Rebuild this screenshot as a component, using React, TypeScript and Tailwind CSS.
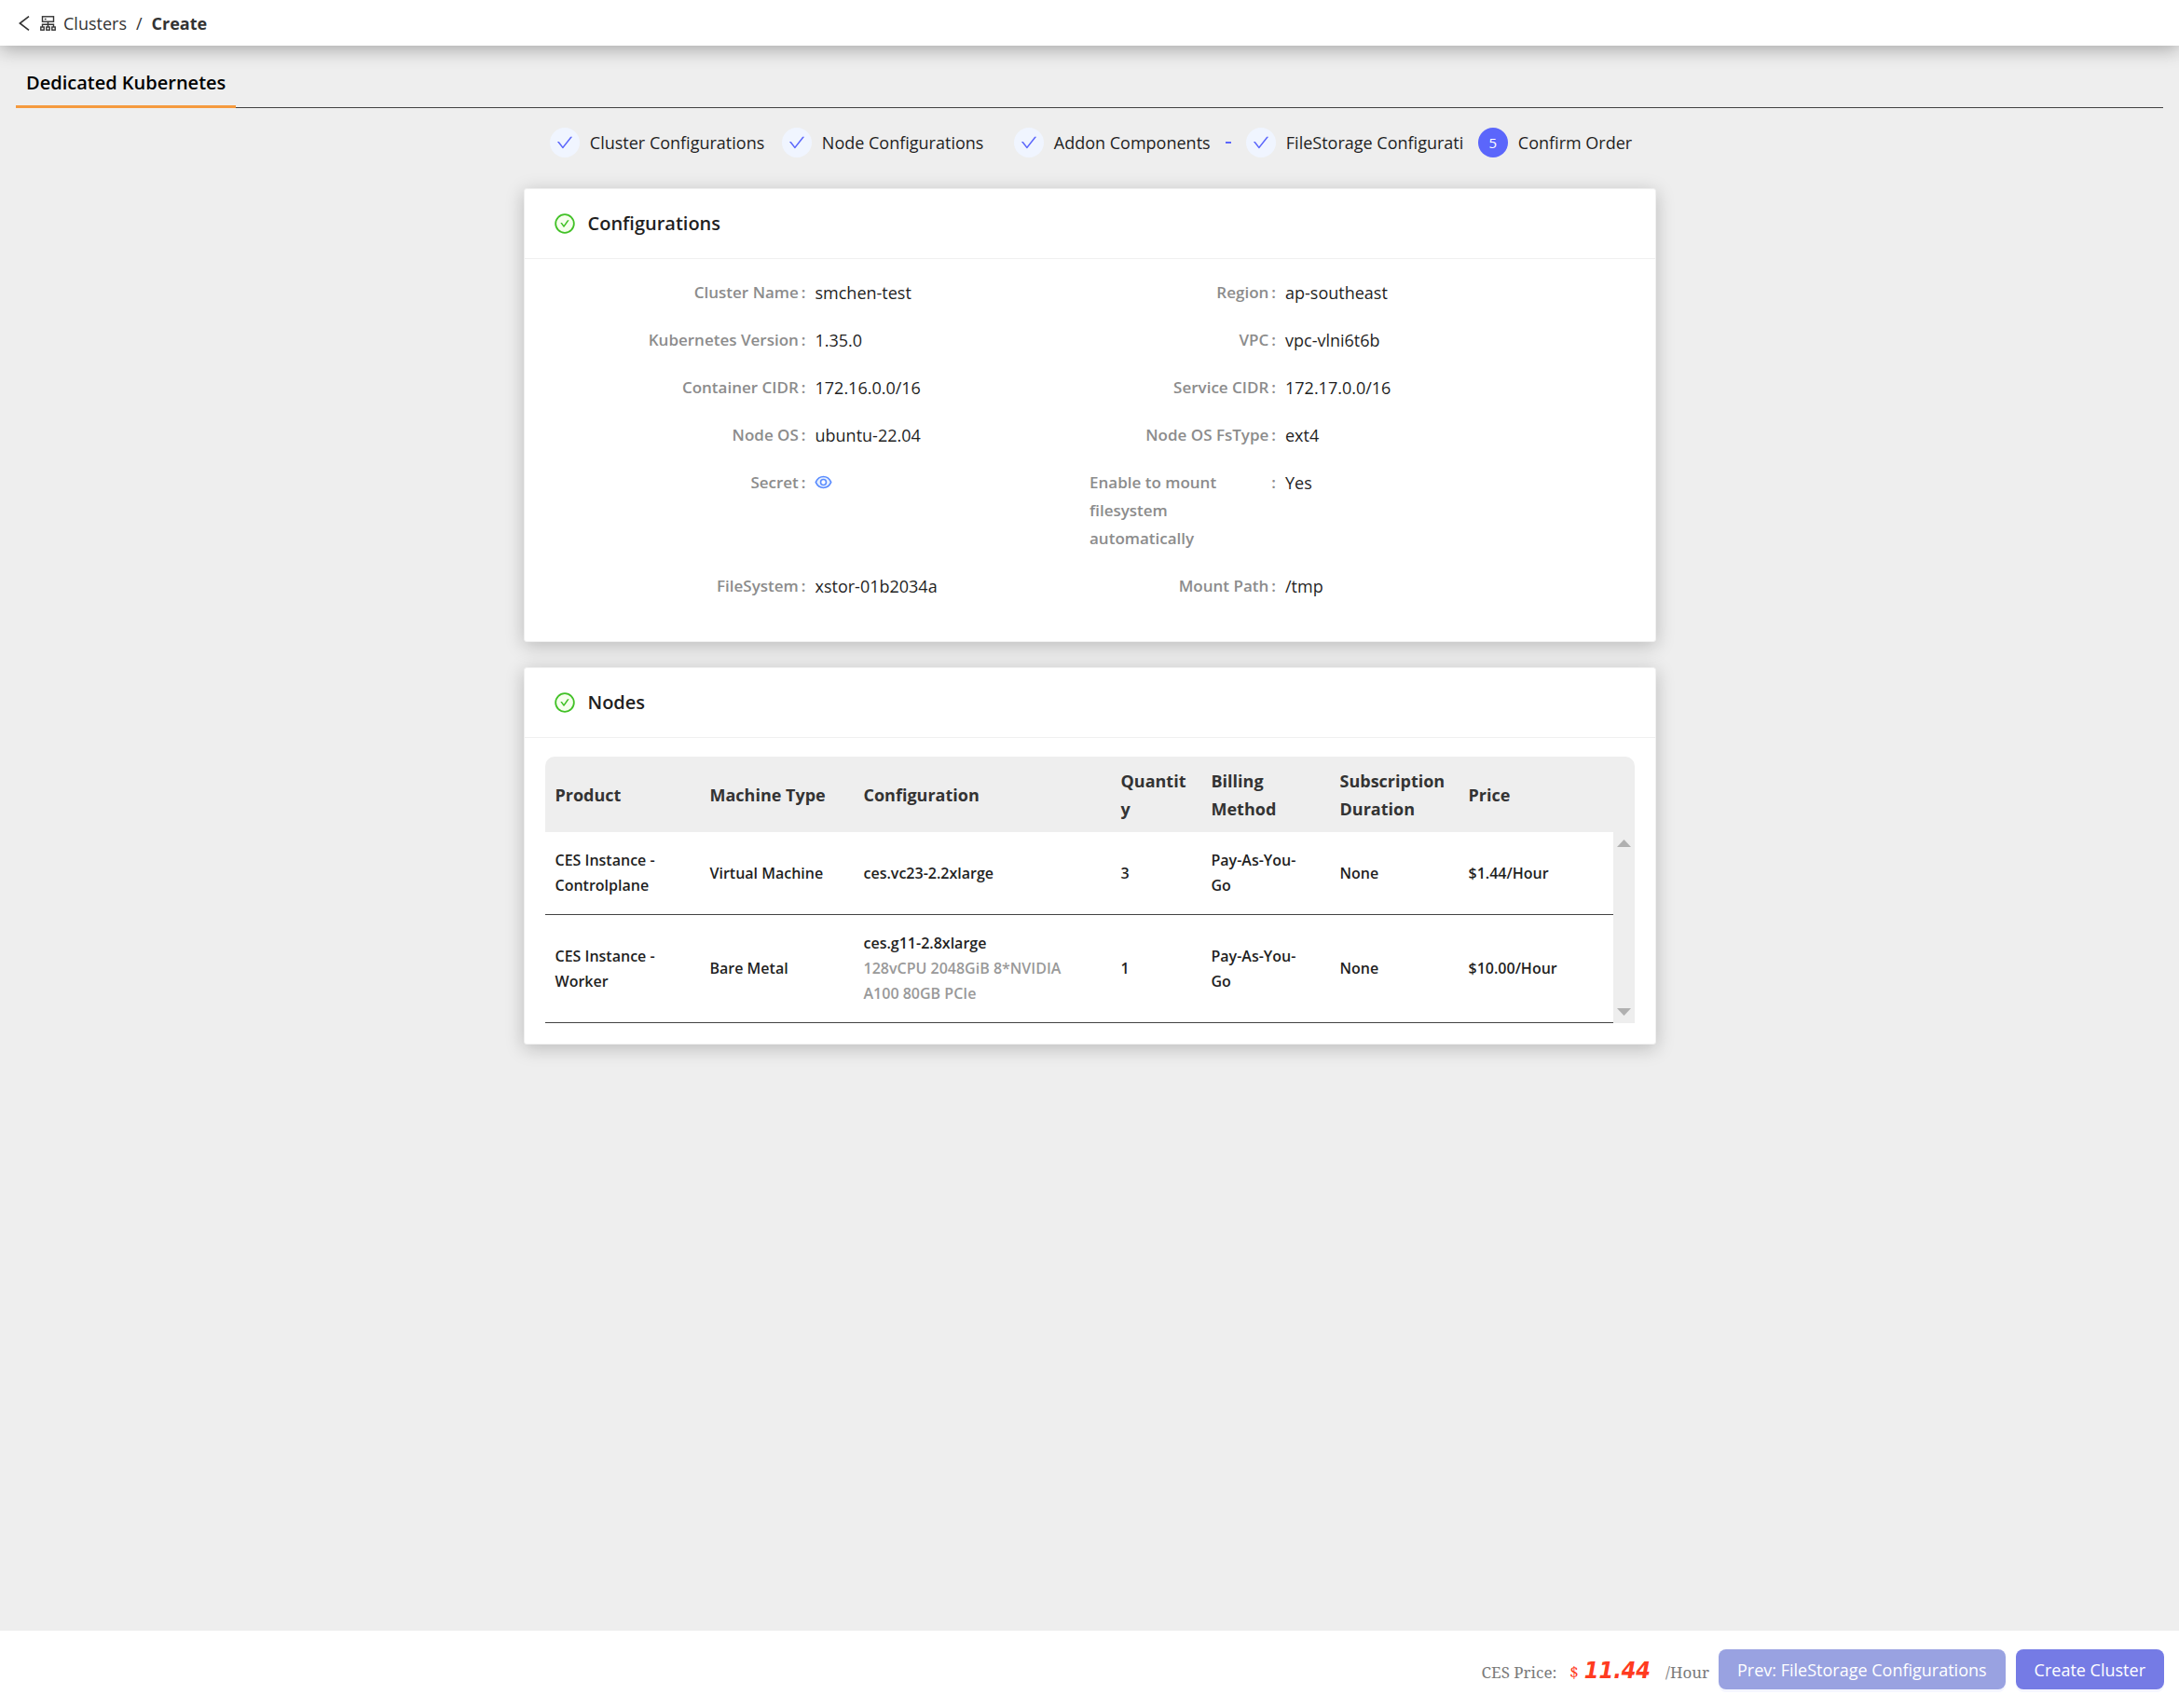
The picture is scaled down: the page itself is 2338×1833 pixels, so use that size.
import React from "react";

function CheckMark({ className }: { className?: string }) {
  return (
    <svg viewBox="0 0 1024 1024" fill="currentColor" className={className} aria-hidden="true">
      <path d="M912 190h-69.9c-9.8 0-19.1 4.500-25.100 12.200L404.700 724.500 207 474a32 32 0 0 0-25.100-12.200H112c-6.700 0-10.400 7.700-6.300 12.900l273.900 347c12.800 16.200 37.400 16.200 50.300 0l488.400-618.900c4.100-5.100.4-12.800-6.300-12.800z" />
    </svg>
  );
}

function CheckCircle() {
  return (
    <svg viewBox="0 0 1024 1024" className="size-6 shrink-0" aria-hidden="true">
      <circle cx="512" cy="512" r="420" fill="#f6ffed" stroke="#41c126" strokeWidth="76" />
      <path
        fill="#41c126"
        d="M699 353h-46.900c-10.200 0-19.900 4.900-25.900 13.300L469 584.300l-71.200-98.800c-6-8.300-15.600-13.300-25.900-13.300H325c-6.500 0-10.300 7.400-6.500 12.700l124.600 172.800a31.800 31.800 0 0 0 51.700 0l210.600-292c3.900-5.300.1-12.700-6.400-12.700z"
      />
    </svg>
  );
}

function ClusterIcon() {
  return (
    <svg viewBox="0 0 17 16" fill="none" stroke="currentColor" strokeWidth="1.400" className="h-4 w-[17px] shrink-0" aria-hidden="true">
      <rect x="2.500" y="0.800" width="12" height="5.400" />
      <path d="M4.800 3.500h1.800" />
      <path d="M8.500 6.200V12M2.500 12V9.200h12V12" />
      <rect x="0.800" y="12" width="3.400" height="3.200" />
      <rect x="6.800" y="12" width="3.400" height="3.200" />
      <rect x="12.800" y="12" width="3.400" height="3.200" />
    </svg>
  );
}

function EyeIcon() {
  return (
    <svg viewBox="0 0 1024 1024" className="size-[21px]" aria-hidden="true">
      <path
        fill="#e6f0ff"
        stroke="#5a8cff"
        strokeWidth="80"
        d="M909.800 502C820 314 686 222 512 222S204 314 114.200 502a24 24 0 0 0 0 20C204 710 338 802 512 802s308-92 397.800-280a24 24 0 0 0 0-20z"
      />
      <circle cx="512" cy="512" r="144" fill="#fff" stroke="#5a8cff" strokeWidth="76" />
    </svg>
  );
}

const steps = [
  { title: "Cluster Configurations" },
  { title: "Node Configurations" },
  { title: "Addon Components", tail: true },
  { title: "FileStorage Configurati" },
  { title: "Confirm Order", current: true },
];

function Steps() {
  return (
    <ol className="grid grid-cols-[repeat(4,249px)_auto] justify-center py-[21px] pl-[3px]">
      {steps.map((step, i) => (
        <li key={step.title} className="flex items-center whitespace-nowrap leading-8 text-[#1f1f1f]">
          {step.current ? (
            <span className="mr-[11px] flex size-8 shrink-0 items-center justify-center rounded-full bg-[#5b66fb] text-[15px] text-white">
              {i + 1}
            </span>
          ) : (
            <span className="mr-[11px] flex size-8 shrink-0 items-center justify-center rounded-full bg-[#f0f5ff] text-[#5b66fb]">
              <CheckMark className="size-5" />
            </span>
          )}
          {step.title}
          {step.tail && <span className="mr-4 ml-auto h-0.5 w-1.5 bg-[#5b66fb]" />}
        </li>
      ))}
    </ol>
  );
}

function Card({ title, children }: { title: string; children: React.ReactNode }) {
  return (
    <section className="rounded-[3px] border border-[#f0f0f0] bg-white shadow-[0_4px_20px_rgba(0,0,0,0.22)]">
      <div className="flex h-[75px] items-center gap-[13px] border-b border-[#f0f0f0] pl-[31px]">
        <CheckCircle />
        <h2 className="text-xl font-semibold text-[#1f1f1f]">{title}</h2>
      </div>
      {children}
    </section>
  );
}

const fields: [string, React.ReactNode][] = [
  ["Cluster Name", "smchen-test"],
  ["Region", "ap-southeast"],
  ["Kubernetes Version", "1.35.0"],
  ["VPC", "vpc-vlni6t6b"],
  ["Container CIDR", "172.16.0.0/16"],
  ["Service CIDR", "172.17.0.0/16"],
  ["Node OS", "ubuntu-22.04"],
  ["Node OS FsType", "ext4"],
  [
    "Secret",
    <button type="button" aria-label="Show secret" className="-ml-0.5 flex h-7 items-center">
      <EyeIcon />
    </button>,
  ],
  ["Enable to mount filesystem automatically", "Yes"],
  ["FileSystem", "xstor-01b2034a"],
  ["Mount Path", "/tmp"],
];

const columns = [
  { title: "Product", width: "w-[166px]" },
  { title: "Machine Type", width: "w-[165px]" },
  { title: "Configuration", width: "w-[276px]" },
  { title: "Quantity", width: "w-[97px]" },
  { title: "Billing Method", width: "w-[138px]" },
  { title: "Subscription Duration", width: "w-[138px]" },
  { title: "Price", width: "w-auto" },
];

const nodes = [
  {
    product: "CES Instance - Controlplane",
    type: "Virtual Machine",
    config: "ces.vc23-2.2xlarge",
    detail: "",
    quantity: 3,
    billing: "Pay-As-You-Go",
    duration: "None",
    price: "$1.44/Hour",
  },
  {
    product: "CES Instance - Worker",
    type: "Bare Metal",
    config: "ces.g11-2.8xlarge",
    detail: "128vCPU 2048GiB 8*NVIDIA A100 80GB PCIe",
    quantity: 1,
    billing: "Pay-As-You-Go",
    duration: "None",
    price: "$10.00/Hour",
  },
];

function NodesTable() {
  return (
    <table className="w-full table-fixed border-separate border-spacing-0 text-left">
      <colgroup>
        {columns.map((c) => (
          <col key={c.title} className={c.width} />
        ))}
        <col className="w-[23px]" />
      </colgroup>
      <thead>
        <tr className="h-[81px] leading-[30px] text-[#333]">
          {columns.map((c) => (
            <th key={c.title} className="bg-[#eee] pr-2.5 pl-[11px] font-bold wrap-anywhere first:rounded-tl-[10px]">
              {c.title}
            </th>
          ))}
          <td className="rounded-tr-[10px] bg-[#eee]" />
        </tr>
      </thead>
      <tbody className="text-base leading-[27px] font-semibold text-[#1f1f1f]">
        {nodes.map((n, i) => (
          <tr key={n.product} className="*:border-b *:border-[#424242] *:py-[17px] *:pr-5 *:pl-[11px]">
            <td>{n.product}</td>
            <td>{n.type}</td>
            <td>
              {n.config}
              {n.detail && <div className="text-[#999]">{n.detail}</div>}
            </td>
            <td>{n.quantity}</td>
            <td>{n.billing}</td>
            <td>{n.duration}</td>
            <td>{n.price}</td>
            {i === 0 && (
              <td rowSpan={nodes.length} aria-hidden="true" className="h-px border-b-0! bg-[#eee] px-1! py-2!">
                <div className="flex h-full flex-col items-center justify-between">
                  <svg viewBox="0 0 15 8" className="w-[15px]">
                    <path d="M7.500 0L15 8H0z" fill="#b0b0b0" />
                  </svg>
                  <svg viewBox="0 0 15 8" className="w-[15px]">
                    <path d="M7.500 8L15 0H0z" fill="#b0b0b0" />
                  </svg>
                </div>
              </td>
            )}
          </tr>
        ))}
      </tbody>
    </table>
  );
}

export default function App() {
  return (
    <div className="flex min-h-screen flex-col bg-[#eee] font-['Open_Sans','Noto_Sans',sans-serif] text-lg">
      <header className="flex h-[49px] items-center bg-white pl-5 text-[#333] shadow-[0_4px_20px_rgba(0,0,0,0.3)]">
        <button type="button" aria-label="Back" className="mr-[11px]">
          <svg viewBox="0 0 12 16" className="h-4 w-3" fill="none" stroke="currentColor" strokeWidth="1.600">
            <path d="M11 0.600L1.300 8L11 15.400" />
          </svg>
        </button>
        <nav aria-label="Breadcrumb" className="flex items-center">
          <ClusterIcon />
          <a href="#clusters" className="ml-2">
            Clusters
          </a>
          <span className="mx-[10px]">/</span>
          <span className="font-bold">Create</span>
        </nav>
      </header>

      <main className="grow">
        <div className="mx-[17px] mt-6 flex border-b border-[#424242]">
          <h1 className="-mb-px border-b-3 border-[#f59a3e] px-[11px] pb-2 text-xl leading-8 font-semibold text-black">
            Dedicated Kubernetes
          </h1>
        </div>

        <Steps />

        <div className="mx-auto flex max-w-[1215px] flex-col gap-[27px] pt-3">
          <Card title="Configurations">
            <dl className="grid grid-cols-2 gap-y-[21px] px-[102px] pt-[21px] pb-11">
              {fields.map(([label, value]) => (
                <div key={label} className="flex leading-[30px]">
                  <dt className="mr-2.5 flex w-[200px] shrink-0 justify-between text-[17px] font-semibold text-[#8c8c8c]">
                    <span className={label.length > 20 ? "max-w-[170px]" : "ml-auto"}>{label}</span>
                    <span className="ml-[3px]">:</span>
                  </dt>
                  <dd className="text-[#1f1f1f]">{value}</dd>
                </div>
              ))}
            </dl>
          </Card>
          <Card title="Nodes">
            <div className="px-[22px] pt-5 pb-[22px]">
              <NodesTable />
            </div>
          </Card>
        </div>
      </main>

      <footer className="flex h-[83px] items-center justify-end bg-white pr-4">
        <p className="mr-2.5 flex items-baseline pt-1 font-['Noto_Serif','Liberation_Serif',serif] text-[17px] text-[#7a7a7a]">
          CES Price:
          <span className="ml-3.5 text-[#ff3b1f]">$</span>
          <span className="mx-1.5 font-['DejaVu_Sans_Condensed','DejaVu_Sans',sans-serif] text-[25px] font-bold text-[#ff3b1f] italic">
            11.44
          </span>
          <span className="ml-2.5">/Hour</span>
        </p>
        <button type="button" className="mr-[11px] h-[43px] rounded-lg bg-[#99a2e1] px-5 text-white shadow-[0_3px_0_rgba(91,102,251,0.06)]">
          Prev: FileStorage Configurations
        </button>
        <button type="button" className="h-[43px] rounded-lg bg-[#757be5] px-5 text-white shadow-[0_3px_0_rgba(91,102,251,0.06)]">
          Create Cluster
        </button>
      </footer>
    </div>
  );
}
